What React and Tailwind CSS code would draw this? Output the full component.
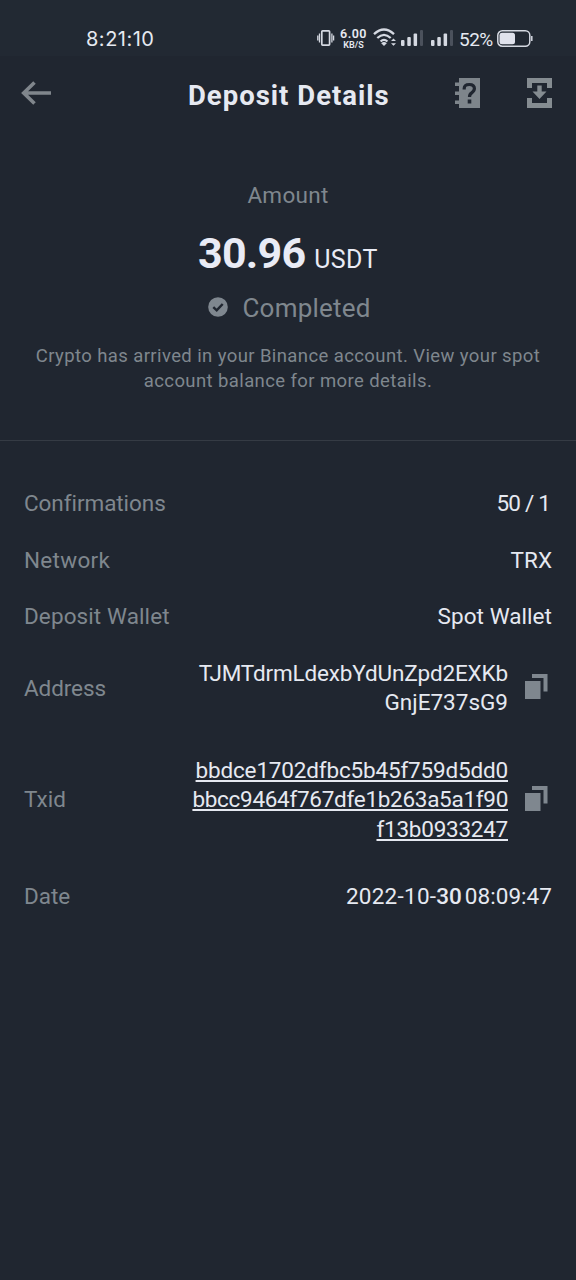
const ArrowLeft = () => (
  <svg width="30" height="24" viewBox="0 0 30 24" fill="none" stroke="#80868c" strokeWidth="3.6">
    <path d="M13.500 1.500L2.700 12L13.500 22.500M3 12H30" />
  </svg>
);

const HelpBook = () => (
  <svg width="25" height="30" viewBox="0 0 25 30" fill="#7e858b">
    <path d="M4 0H25V30H4V26H0V22.500H4V17H0V13.500H4V8H0V4.500H4Z" />
    <path d="M9.200 11.500V10.500Q9.200 6.500 14.300 6.500Q19.400 6.500 19.400 10.600Q19.400 13 16.700 14.800Q14.500 16.200 14.500 19" fill="none" stroke="#202630" strokeWidth="3.200" />
    <path d="M12.700 21.500H16.300V25.500H12.700Z" fill="#202630" />
  </svg>
);

const SaveIcon = () => (
  <svg width="25" height="30" viewBox="0 0 25 30" fill="#858c91">
    <path d="M0 0H25V10H20V5H5V10H0ZM0 20H5V25H20V20H25V30H0ZM10.300 7.500H14.700V13.500H19.500L12.500 21L5.500 13.500H10.300Z" />
  </svg>
);

const CopyIcon = () => (
  <svg width="23" height="25" viewBox="0 0 23 25" fill="#7f878f">
    <path d="M0 7H15.500V25H0Z" />
    <path d="M7 0H22.500V17.500H18.500V4H7Z" />
  </svg>
);

const CheckIcon = () => (
  <svg width="20" height="20" viewBox="0 0 20 20">
    <circle cx="10" cy="10" r="9.800" fill="#7f878f" />
    <path d="M5.300 10.200L8.700 13.300L14.700 7" fill="none" stroke="#202630" strokeWidth="2.500" />
  </svg>
);

const Vibrate = () => (
  <svg width="18" height="16" viewBox="0 0 18 16" fill="none" stroke="#d5d9e2" strokeWidth="1.700">
    <rect x="4.800" y="0.900" width="7.800" height="14.200" rx="0.800" />
    <path d="M2.500 3.500V12.500M0.800 5.500V10.500M14.900 3.500V12.500M16.600 5.500V10.500" strokeWidth="1.300" />
  </svg>
);

const Wifi = () => (
  <svg width="24" height="19" viewBox="0 0 24 19" fill="none" stroke="#d5d9e2" strokeWidth="2.300">
    <path d="M1 6.200Q11 -3.200 21 6.200M4.300 10Q11 3.700 17.700 10M7.600 13.500Q11 10.300 14.400 13.500" />
    <path d="M8.200 15.200Q11 13 13.800 15.200L11 18Z" fill="#d5d9e2" stroke="none" />
    <path d="M18 13L20.500 10.500L23 13ZM18 15.200L20.500 17.700L23 15.200Z" fill="#d5d9e2" stroke="none" />
  </svg>
);

const Signal = () => (
  <svg width="23" height="16" viewBox="0 0 23 16" fill="#d5d9e2">
    <rect x="0" y="10" width="3.500" height="6" rx="1" />
    <rect x="6.300" y="7" width="3.500" height="9" rx="1" />
    <rect x="12.600" y="3.500" width="3.500" height="12.500" rx="1" />
    <rect x="19" y="0" width="3" height="16" rx="1" fill="#4b515c" />
  </svg>
);

const Battery = () => (
  <svg width="36" height="17" viewBox="0 0 36 17">
    <rect x="0.800" y="0.800" width="32" height="15.400" rx="4.500" fill="none" stroke="#d5d9e2" strokeWidth="1.500" />
    <rect x="2.500" y="2.700" width="15.500" height="11.600" rx="2.500" fill="#e0e2ec" />
    <path d="M34.800 6V11" stroke="#d5d9e2" strokeWidth="1.500" />
  </svg>
);

const rows = [
  { label: "Confirmations", value: "50 / 1", labelClass: "tracking-[-0.06px]", valueClass: "tracking-[-0.8px] pr-[2px]" },
  { label: "Network", value: "TRX", labelClass: "tracking-[0.3px]", valueClass: "tracking-[0px]" },
  { label: "Deposit Wallet", value: "Spot Wallet", labelClass: "tracking-[0.1px]", valueClass: "tracking-[0.05px]" },
];

const App = () => {
  return (
    <div className="min-h-[1280px] w-[576px] bg-[#202630] font-['Roboto',sans-serif] text-[#e6e9f1]">
      {/* Status bar */}
      <div className="flex h-[56px] items-start bg-[#222933] pt-[28px] pl-[86px]">
        <span className="w-[231px] text-[20px] leading-[22px] tracking-[0.5px] font-['Inter',sans-serif]">8:21:10</span>
        <div className="mt-[2px] w-[20px]"><Vibrate /></div>
        <div className="w-[36px] pr-[3px] text-center font-['Roboto',sans-serif] font-semibold">
          <div className="text-[12.500px] leading-[12px] tracking-[0.5px]">6.00</div>
          <div className="text-[9px] leading-[10px]">KB/S</div>
        </div>
        <div className="w-[28px]"><Wifi /></div>
        <div className="mt-[2px] w-[30px]"><Signal /></div>
        <div className="mt-[2px] w-[28px]"><Signal /></div>
        <span className="w-[38px] text-[19px] leading-[23px] tracking-[-0.5px]">52%</span>
        <div className="mt-[2px]"><Battery /></div>
      </div>

      {/* Header */}
      <div className="flex h-[80px] items-center pr-[24px] pl-[21px]">
        <div className="mb-[6px] w-[167px]"><ArrowLeft /></div>
        <h1 className="w-[267px] text-[27.500px] font-bold whitespace-nowrap tracking-[1px]">Deposit Details</h1>
        <div className="mb-[6px] w-[72px]"><HelpBook /></div>
        <div className="mb-[6px]"><SaveIcon /></div>
      </div>

      {/* Amount */}
      <div className="flex h-[305px] flex-col items-center border-b border-[#353b44] pt-[44px] text-[#7f878e]">
        <p className="text-[22.500px] leading-[30px] tracking-[0.3px]">Amount</p>
        <div className="mt-[16px] flex h-[54px] items-baseline gap-[9px] leading-[54px] text-[#e9ebf5]">
          <span className="text-[43px] font-bold leading-[54px] tracking-[-0.8px]">30.96</span>
          <span className="text-[25px] leading-[54px] tracking-[0.4px]">USDT</span>
        </div>
        <div className="mt-[12px] flex h-[32px] items-center gap-[14px] pl-[3px]">
          <div className="mb-[3px]"><CheckIcon /></div>
          <span className="text-[26px] tracking-[0.2px]">Completed</span>
        </div>
        <p className="mt-[20px] text-center text-[18.500px] leading-[25px] whitespace-nowrap tracking-[0.4px]">
          Crypto has arrived in your Binance account. View your spot
          <br />
          account balance for more details.
        </p>
      </div>

      {/* Details */}
      <div className="px-[24px] pt-[47px] text-[22.500px] leading-[30px]">
        {rows.map((row) => (
          <div key={row.label} className="mb-[26.500px] flex justify-between">
            <span className={`text-[#7f878e] ${row.labelClass}`}>{row.label}</span>
            <span className={row.valueClass}>{row.value}</span>
          </div>
        ))}
        <div className="mt-[27.500px] flex h-[59px] items-center justify-between">
          <span className="text-[#7f878e] tracking-[-0.1px]">Address</span>
          <div className="flex items-center gap-[17px] pr-[4px]">
            <p className="text-right leading-[29.500px]">
              <span className="tracking-[-0.16px]">TJMTdrmLdexbYdUnZpd2EXKb</span>
              <br />
              GnjE737sG9
            </p>
            <div className="pb-[4px]"><CopyIcon /></div>
          </div>
        </div>
        <div className="mt-[38px] flex h-[89px] items-center justify-between">
          <span className="pb-[2px] text-[#7f878e]">Txid</span>
          <div className="flex items-center gap-[17px] pr-[4px]">
            <p className="text-right leading-[29.500px] underline decoration-[1.500px] underline-offset-[2px]">
              <span className="tracking-[-0.17px]">bbdce1702dfbc5b45f759d5dd0</span>
              <br />
              <span className="tracking-[-0.29px]">bbcc9464f767dfe1b263a5a1f90</span>
              <br />
              <span className="tracking-[-0.25px]">f13b0933247</span>
            </p>
            <div className="pb-[4px]"><CopyIcon /></div>
          </div>
        </div>
        <div className="mt-[36px] flex justify-between">
          <span className="text-[#7f878e]">Date</span>
          <div className="flex">
            <span className="tracking-[0.25px]">2022-10-</span>
            <span className="font-medium">30</span>
            <span className="ml-[3px] tracking-[0.05px]">08:09:47</span>
          </div>
        </div>
      </div>
    </div>
  );
};

export default App;
